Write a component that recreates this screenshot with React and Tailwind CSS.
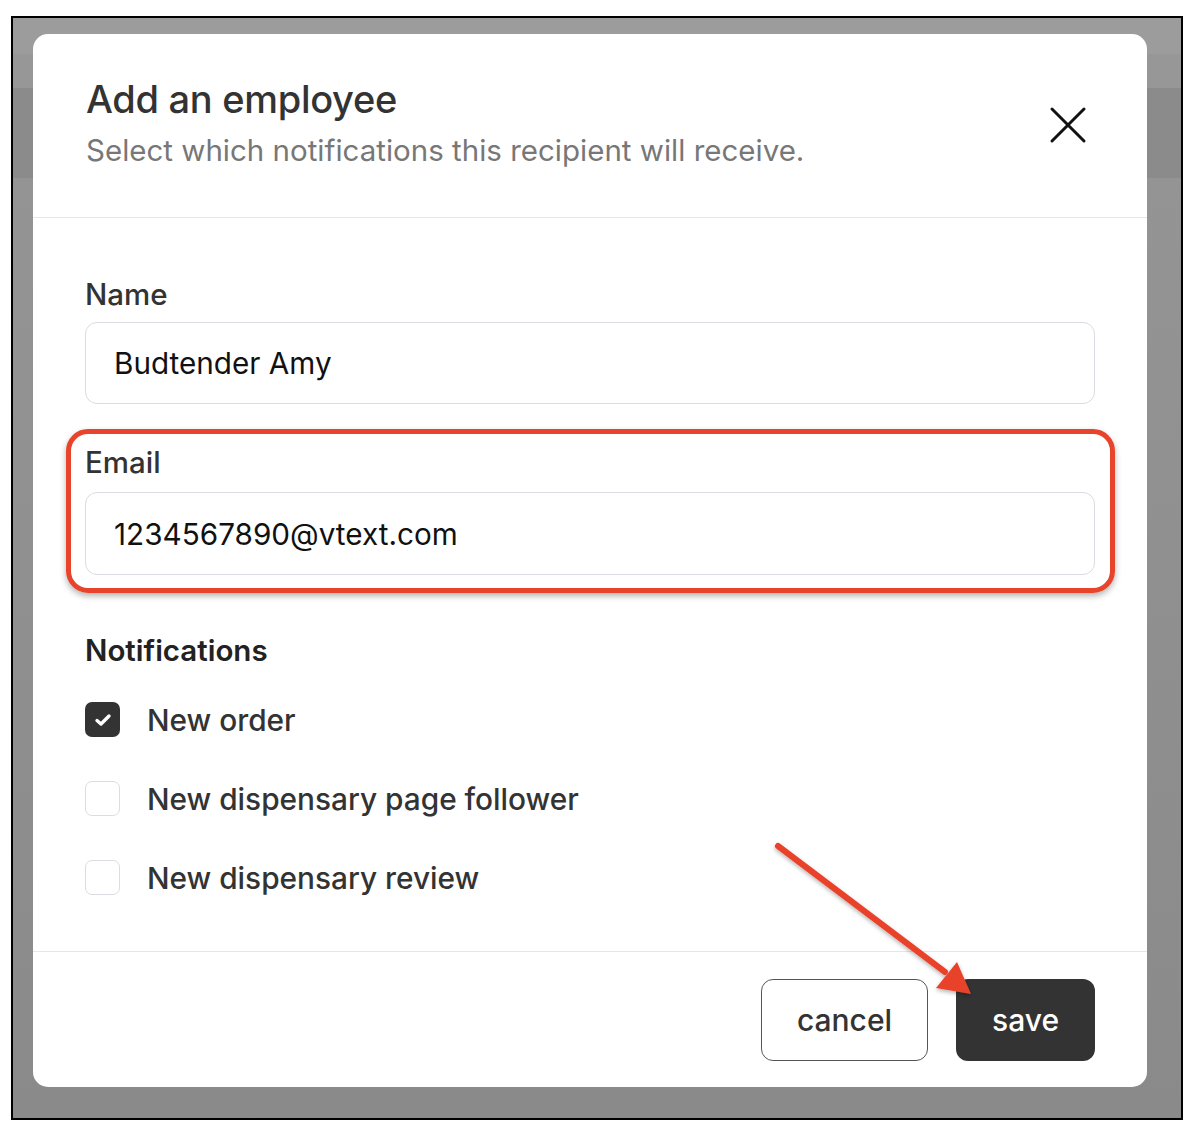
import React from "react";

const font = { fontFamily: "Inter, 'Noto Sans', sans-serif" };

const notifications = [
    { id: 1, label: "New order", checked: true },
    { id: 2, label: "New dispensary page follower", checked: false },
    { id: 3, label: "New dispensary review", checked: false },
];

const Field = ({ label, value, labelGap, inputH }) => (
    <div className="flex flex-col">
        <label className="text-[29.5px] leading-[32px] font-medium text-[#333]">{label}</label>
        <div
            className={`${labelGap} ${inputH} flex items-center px-[28px] rounded-[12px] border border-[#dadce1] bg-white`}
        >
            <span className="text-[29.7px] leading-[34px] text-[#111]">{value}</span>
        </div>
    </div>
);

const Checkbox = ({ checked }) =>
    checked ? (
        <span className="w-[35px] h-[35px] rounded-[7px] bg-[#333] flex items-center justify-center shrink-0">
            <svg width="18" height="14" viewBox="0 0 18 14" fill="none">
                <path d="M3 7.5 L7 11 L15 3" stroke="white" strokeWidth="3.4" strokeLinecap="round" strokeLinejoin="round" />
            </svg>
        </span>
    ) : (
        <span className="w-[35px] h-[35px] rounded-[7px] border border-[#dcdde2] bg-white shrink-0" />
    );

const App = () => {
    return (
        <div className="relative w-[1194px] h-[1132px] bg-white pt-[16px] pl-[11px]" style={font}>
            {/* screenshot frame with dimmed page behind the dialog */}
            <div className="relative w-[1172px] h-[1104px] border-2 border-black bg-[#929292] overflow-hidden">
                <div className="h-[36px] bg-[#9c9c9c]" />
                <div className="h-[34px] bg-[#979797]" />
                <div className="h-[90px] bg-[#8b8b8b]" />
                <div className="h-[942px] bg-gradient-to-b from-[#949494] to-[#8a8a8a]" />

                {/* dialog */}
                <div className="absolute left-[20px] top-[16px] w-[1114px] h-[1053px] bg-white rounded-[15px] flex flex-col">
                    <div className="relative h-[184px] px-[53px] pt-[42px] border-b border-[#e6e6e6] shrink-0">
                        <h2 className="text-[38px] leading-[46px] font-medium text-[#333] tracking-[-0.3px]">Add an employee</h2>
                        <p className="mt-[10px] text-[29.5px] leading-[36px] text-[#777]">
                            Select which notifications this recipient will receive.
                        </p>
                        <button className="absolute right-[60px] top-[72px] w-[38px] h-[38px] flex items-center justify-center">
                            <svg width="38" height="38" viewBox="0 0 38 38" fill="none">
                                <path d="M3 3 L35 35 M35 3 L3 35" stroke="#111" strokeWidth="3" strokeLinecap="round" />
                            </svg>
                        </button>
                    </div>

                    <div className="relative flex-1 px-[52px] pt-[60px]">
                        <Field label="Name" value="Budtender Amy" labelGap="mt-[12px]" inputH="h-[82px]" />
                        <div className="mt-[42px]">
                            <Field label="Email" value="1234567890@vtext.com" labelGap="mt-[14px]" inputH="h-[83px]" />
                        </div>

                        <h3 className="mt-[59px] text-[29.5px] leading-[32px] font-semibold text-[#222]">Notifications</h3>
                        <div className="mt-[36px] flex flex-col gap-[44px]">
                            {notifications.map((n) => (
                                <div key={n.id} className="flex items-center gap-[27px]">
                                    <Checkbox checked={n.checked} />
                                    <span className="text-[29.8px] leading-[34px] font-medium text-[#333]">{n.label}</span>
                                </div>
                            ))}
                        </div>

                        {/* red annotation around the email field */}
                        <div className="absolute left-[33px] top-[211px] w-[1049px] h-[164px] border-[5px] border-[#e8432b] rounded-[22px] shadow-[0_3px_6px_rgba(0,0,0,0.3)] pointer-events-none" />
                    </div>

                    <div className="h-[136px] border-t border-[#e6e6e6] flex items-start justify-end gap-[28px] pt-[27px] pr-[52px] shrink-0">
                        <button className="w-[167px] h-[82px] rounded-[12px] border border-[#555] bg-white text-[30px] font-medium text-[#333]">
                            cancel
                        </button>
                        <button className="w-[139px] h-[82px] rounded-[12px] bg-[#333] text-[30px] font-medium text-white">
                            save
                        </button>
                    </div>
                </div>
            </div>

            {/* red arrow annotation */}
            <svg className="absolute left-0 top-0 pointer-events-none" width="1194" height="1132" viewBox="0 0 1194 1132">
                <defs>
                    <filter id="sh" x="-10%" y="-10%" width="130%" height="130%">
                        <feDropShadow dx="0" dy="2" stdDeviation="2" floodColor="#000" floodOpacity="0.3" />
                    </filter>
                </defs>
                <g filter="url(#sh)">
                    <line x1="778" y1="846" x2="945" y2="972" stroke="#e8432b" strokeWidth="6" strokeLinecap="round" />
                    <polygon points="971,994 936,988 957,962" fill="#e8432b" />
                </g>
            </svg>
        </div>
    );
};

export default App;
